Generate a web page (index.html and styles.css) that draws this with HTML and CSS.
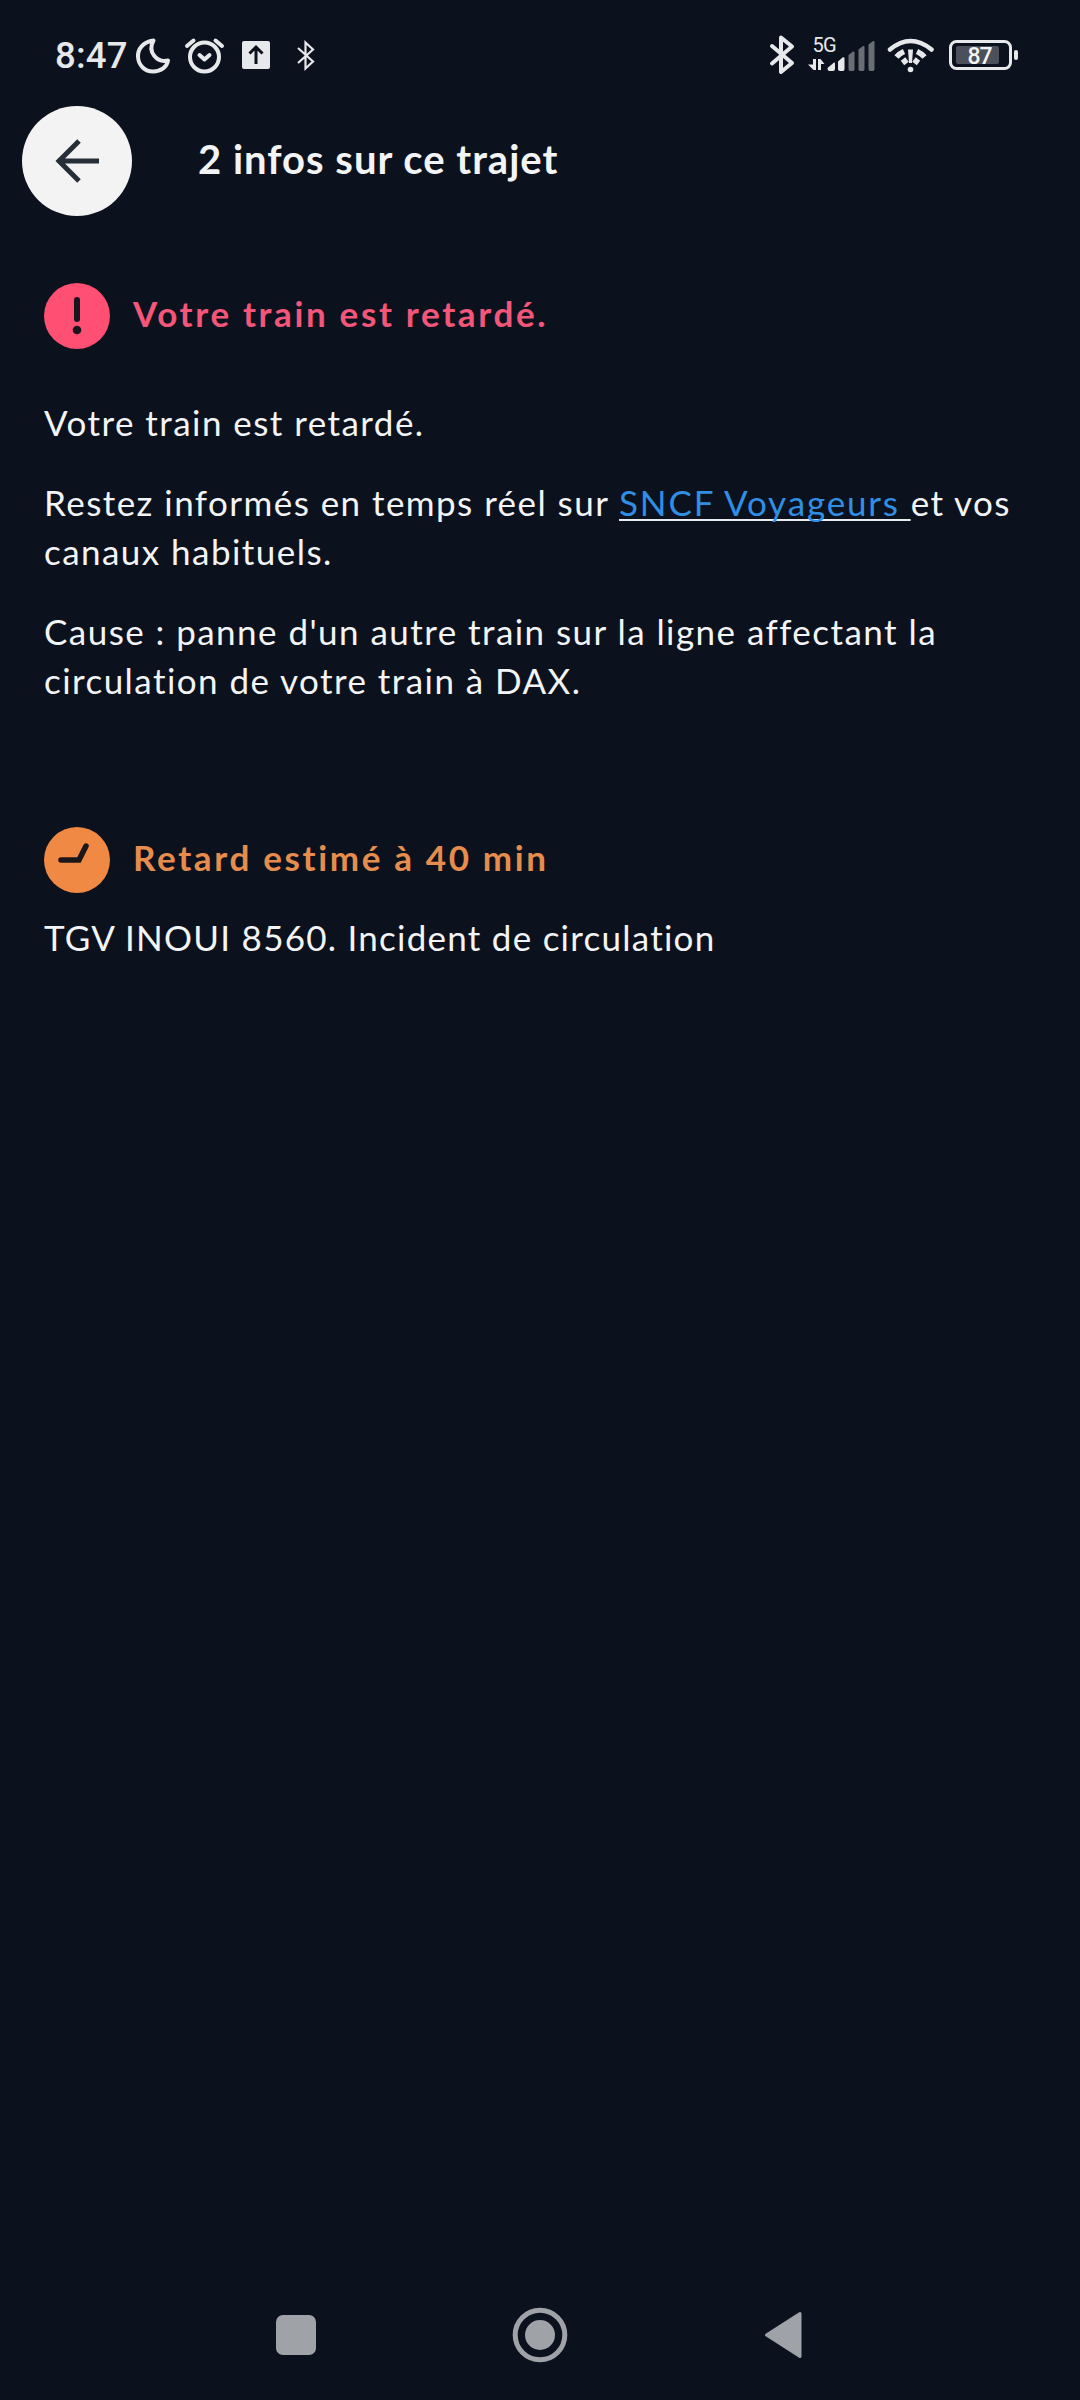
FILE: index.html
```
<!DOCTYPE html>
<html lang="fr">
<head>
  <meta charset="UTF-8">
  <title>Infos trajet</title>
  <link rel="stylesheet" href="styles.css">
</head>
<body>
  <div class="status-bar">
    <span class="time">8:47</span>
    <svg class="moon" width="38" height="40" viewBox="134 34 38 40" fill="none" stroke="#e6e8ea" stroke-width="4" stroke-linejoin="round">
      <path d="M153.500 39.500C143 41 137.500 48 138 56C138.500 64.500 145 70.500 153 70.500C161 70.500 167 66 168 59.500C157 62 147 51 153.500 39.500Z"/>
    </svg>
    <svg class="alarm" width="44" height="40" viewBox="182 34 44 40" fill="none" stroke="#e6e8ea" stroke-width="4" stroke-linecap="round" stroke-linejoin="round">
      <circle cx="204.500" cy="56" r="14.500"/>
      <path d="M187 45l6.500-5.500M222 45l-6.500-5.500M199.500 54l5 4.500 5-4.500"/>
    </svg>
    <svg class="upload" width="28" height="40" viewBox="242 35 28 40">
      <rect x="242" y="41" width="28" height="28" rx="2" fill="#e6e8ea"/>
      <path d="M256 64V47.500M249.500 53.500l6.500-6.500 6.500 6.500" fill="none" stroke="#0c121d" stroke-width="3"/>
    </svg>
    <svg class="bt-small" width="20" height="40" viewBox="296 35 20 40" fill="none" stroke="#e6e8ea" stroke-width="2.200">
      <path d="M298 48l15 13.500-7.500 7V42.500l7.500 7-15 13.500"/>
    </svg>
    <svg class="bt" width="28" height="44" viewBox="768 33 28 44" fill="none" stroke="#e6e8ea" stroke-width="4" stroke-linecap="round" stroke-linejoin="round">
      <path d="M772 46l20 17-11 9V37.500l11 9-20 17"/>
    </svg>
    <svg class="signal" width="70" height="44" viewBox="807 33 70 44" fill="#e6e8ea">
      <text class="net" x="812.500" y="52" textLength="24">5G</text>
      <path d="M813 59h3v11h-2.500l-5.500-5.500h5zM818 59h2.500l4 5h-3.500v6h-3z"/>
      <path d="M827.500 68l6.500-5.500q1-.5 1 1V69q0 2-2 2h-3.500q-2 0-2-3zM838 61.500l4.500-4q2-1 2 1V69q0 2-1.500 2H840q-2 0-2-2z"/>
      <path fill="#696d74" d="M848.500 55l4.500-3.500q1.500-.5 1.500 1V69q0 2-1.500 2H850q-1.500 0-1.500-2zM858.500 49.500l4.500-3.500q1.500-.5 1.500 1V69q0 2-1.500 2H860q-1.500 0-1.500-2zM868.500 44.500l4.500-3.500q1.500-.5 1.500 1V69q0 2-1.500 2H870q-1.500 0-1.500-2z"/>
    </svg>
    <svg class="wifi" width="50" height="44" viewBox="886 33 50 44" fill="none" stroke="#e6e8ea" stroke-width="4.500">
      <path d="M890 49.500Q910.500 32.500 931.500 49.500" stroke-linecap="round"/>
      <path d="M896.500 57q3-3.500 7.500-5.500M924.500 57q-3-3.500-7.500-5.500M902.500 63l4.500-3.500M918.500 63l-4.500-3.500" stroke-width="5.500"/>
      <path d="M908 49.500h5l-1 13.500h-3z" fill="#e6e8ea" stroke="none"/>
      <circle cx="910.500" cy="69.500" r="2.800" fill="#e6e8ea" stroke="none"/>
    </svg>
    <svg class="battery" width="72" height="44" viewBox="948 33 72 44">
      <rect x="950.500" y="41.500" width="60" height="27" rx="6" fill="none" stroke="#e6e8ea" stroke-width="3"/>
      <rect x="956" y="46" width="43" height="18" rx="2" fill="#4c505a"/>
      <rect x="1014" y="50" width="4" height="10" rx="2" fill="#e6e8ea"/>
      <text class="level" x="967.500" y="63.500" textLength="25" fill="#f4f4f4">87</text>
    </svg>
  </div>

  <header class="header">
    <button class="back" aria-label="Retour">
      <svg width="50" height="50" viewBox="52 136 50 50" fill="none" stroke="#262e38" stroke-width="5">
        <path d="M99 161H58M79 141L59 161l20 20"/>
      </svg>
    </button>
    <h1>2 infos sur ce trajet</h1>
  </header>

  <main class="content">
    <section class="info delayed">
      <div class="info-title">
        <svg width="66" height="66" viewBox="0 0 66 66">
          <circle cx="33" cy="33" r="33" fill="#ff4f72"/>
          <path d="M33 17v19" stroke="#1a1420" stroke-width="6" stroke-linecap="round"/>
          <circle cx="33" cy="47" r="4.300" fill="#1a1420"/>
        </svg>
        <h2>Votre train est retardé.</h2>
      </div>
      <div class="info-text">
        <p>Votre train est retardé.</p>
        <p>Restez informés en temps réel sur <a href="#">SNCF Voyageurs </a>et vos<br>canaux habituels.</p>
        <p>Cause : panne d'un autre train sur la ligne affectant la<br>circulation de votre train à DAX.</p>
      </div>
    </section>

    <section class="info estimate">
      <div class="info-title">
        <svg width="66" height="66" viewBox="0 0 66 66">
          <circle cx="33" cy="33" r="33" fill="#f08943"/>
          <path d="M17 33h18l7-14" fill="none" stroke="#1b1718" stroke-width="5.500" stroke-linecap="round"/>
        </svg>
        <h2>Retard estimé à 40 min</h2>
      </div>
      <div class="info-text">
        <p>TGV INOUI 8560. Incident de circulation</p>
      </div>
    </section>
  </main>

  <nav class="nav-bar">
    <svg width="60" height="60" viewBox="0 0 60 60"><rect x="10" y="10" width="40" height="40" rx="7" fill="#9fa3a8"/></svg>
    <svg width="60" height="60" viewBox="0 0 60 60">
      <circle cx="30" cy="30" r="24.800" fill="none" stroke="#9fa3a8" stroke-width="5"/>
      <circle cx="30" cy="30" r="15" fill="#9fa3a8"/>
    </svg>
    <svg width="60" height="60" viewBox="0 0 60 60"><path d="M12.500 30L46 8.500v43z" fill="#9fa3a8" stroke="#9fa3a8" stroke-width="3" stroke-linejoin="round"/></svg>
  </nav>
</body>
</html>
```
FILE: styles.css
```
* {
  box-sizing: border-box;
}
body {
  margin: 0;
  height: 2400px;
  display: flex;
  flex-direction: column;
  background: #0c121d;
  color: #f3f4f6;
  font-family: Lato, "Liberation Sans", sans-serif;
}
svg {
  display: block;
  flex: none;
}
.status-bar {
  height: 106px;
  padding: 4px 60px 0 55px;
  display: flex;
  align-items: center;
}
.time {
  width: 79px;
  padding-top: 2px;
  font: 500 36.5px/40px Roboto, sans-serif;
  letter-spacing: 0.2px;
  color: #e6e8ea;
}
.alarm {
  margin-left: 10px;
}
.upload {
  margin-left: 16px;
}
.bt-small {
  margin-left: 26px;
}
.bt {
  margin-left: auto;
}
.signal {
  margin-left: 11px;
}
.wifi {
  margin-left: 9px;
}
.battery {
  margin-left: 12px;
}
.net {
  font: 400 20px Roboto, sans-serif;
}
.level {
  font: 500 23px Roboto, sans-serif;
}
.header {
  height: 110px;
  padding-left: 22px;
  display: flex;
  align-items: center;
}
.back {
  width: 110px;
  height: 110px;
  padding: 0;
  border: none;
  border-radius: 50%;
  background: #f3f3f3;
  display: flex;
  align-items: center;
  justify-content: center;
}
h1 {
  margin: 0 0 4px 66px;
  font-size: 40px;
  line-height: 48px;
  font-weight: 700;
  letter-spacing: 1px;
}
.content {
  flex: 1;
  padding: 67px 44px 0;
}
.info-title {
  display: flex;
  align-items: center;
  gap: 23px;
}
h2 {
  margin: 0 0 7px;
  font-size: 35px;
  line-height: 44px;
  font-weight: 700;
  letter-spacing: 2.65px;
}
.delayed h2 {
  color: #f4567a;
}
.estimate h2 {
  color: #e68d4e;
}
.info-text {
  font-size: 35px;
  line-height: 49px;
  letter-spacing: 1.45px;
  white-space: nowrap;
}
.info-text p {
  margin: 0 0 31px;
}
.delayed .info-text {
  padding-top: 49px;
}
.estimate {
  margin-top: 122px;
}
.estimate .info-text {
  padding-top: 20px;
  letter-spacing: 1.25px;
}
a {
  color: #308fe4;
  letter-spacing: 1.85px;
  text-decoration: underline;
  text-decoration-color: #e8ebef;
  text-decoration-thickness: 2px;
  text-decoration-skip-ink: none;
  text-underline-offset: 3px;
}
.nav-bar {
  height: 130px;
  padding: 0 266px 0 266px;
  display: flex;
  align-items: center;
  justify-content: space-between;
}
```
